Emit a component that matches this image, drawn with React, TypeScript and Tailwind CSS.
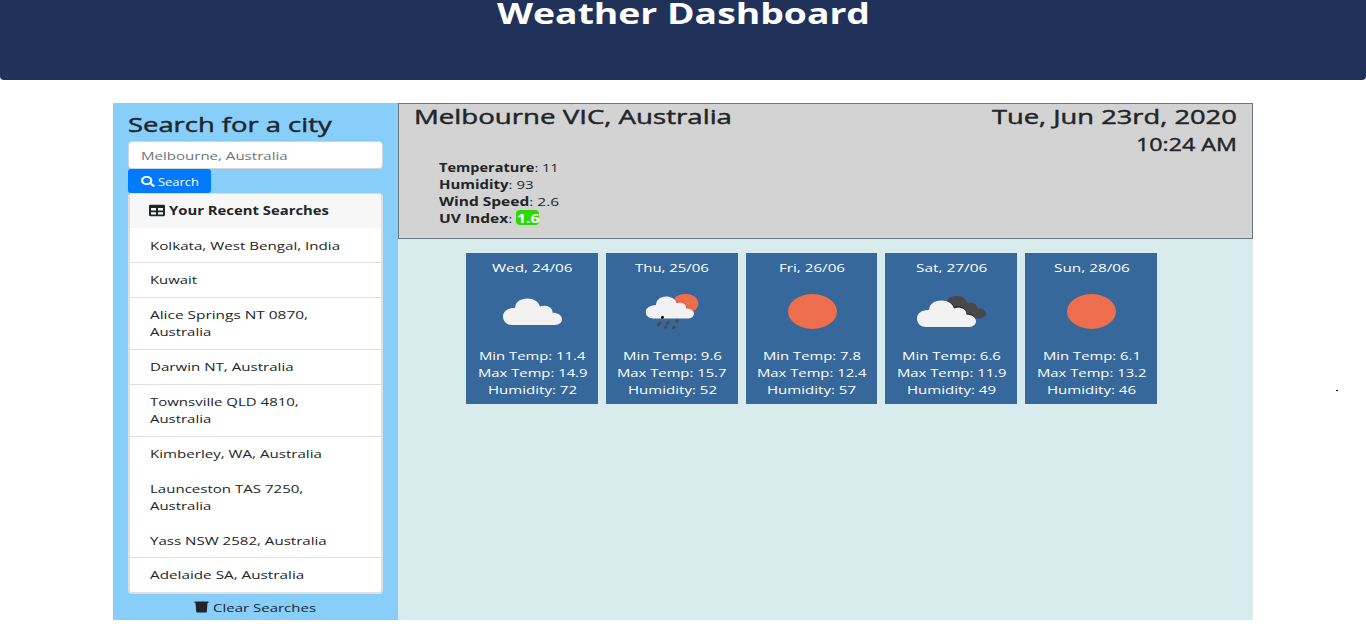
import { useLayoutEffect, useRef, useState, type ReactNode } from 'react';
import { FaSearch, FaTable } from 'react-icons/fa';

/** A single line of text, widened or narrowed to fill exactly `w` pixels. */
function Fit({ w, className = '', children }: { w: number; className?: string; children: ReactNode }) {
  const ref = useRef<HTMLSpanElement>(null);
  const [scale, setScale] = useState(1);
  useLayoutEffect(() => {
    if (ref.current) setScale(w / ref.current.offsetWidth);
  }, [w]);
  return (
    <span className={`block shrink-0 ${className}`} style={{ width: w }}>
      <span ref={ref} className="block w-max origin-left whitespace-nowrap" style={{ transform: `scaleX(${scale})` }}>
        {children}
      </span>
    </span>
  );
}

type Line = [string, number];

const recent: { lines: Line[]; size: string }[] = [
  { lines: [['Kolkata, West Bengal, India', 189.5]], size: 'h-[35px] border-b pt-[9px]' },
  { lines: [['Kuwait', 46.5]], size: 'h-[35px] border-b pt-2' },
  { lines: [['Alice Springs NT 0870,', 158], ['Australia', 61]], size: 'h-[52px] border-b pt-2' },
  { lines: [['Darwin NT, Australia', 143]], size: 'h-[35px] border-b pt-2' },
  { lines: [['Townsville QLD 4810,', 148.5], ['Australia', 61]], size: 'h-[52px] border-b pt-2' },
  { lines: [['Kimberley, WA, Australia', 172]], size: 'h-[35px] pt-2' },
  { lines: [['Launceston TAS 7250,', 153], ['Australia', 61]], size: 'h-[52px] pt-2' },
  { lines: [['Yass NSW 2582, Australia', 177]], size: 'h-[34px] border-b pt-2' },
  { lines: [['Adelaide SA, Australia', 154]], size: 'h-[34px] pt-2' },
];

const cloudPath =
  'M10 53C5 53 1 49.5 1 44.5C1 39.500 5.500 36 12 36L13.300 35.500C13 30.500 18 26.500 25.500 26.500C32 26.500 36.500 29.500 38 34.500C44 32.500 51 35 50.500 40.800C56 40.800 60 43.500 60 47.300C60 50.500 57 53 53 53Z';

function Cloud() {
  return (
    <svg className="h-[70px] w-[132px]" viewBox="466 277 132 70">
      <path transform="translate(502 272)" d={cloudPath} fill="#f1f2f1" />
    </svg>
  );
}

function SunRain() {
  return (
    <svg className="h-[70px] w-[132px]" viewBox="606 277 132 70">
      <ellipse cx="685.500" cy="303.500" rx="12.800" ry="9.800" fill="#ec6e4c" />
      <path
        d="M653 318.500C648.500 318.500 645.800 315.500 645.800 312C645.800 308 649.500 305.500 656 305C656 300 660.500 296.500 666 296.500C671 296.500 675.500 299 676.500 303C682 301 687 304 686.500 308C691 308 694 310.500 694 313.500C694 316.500 691 318.500 687.500 318.500Z"
        fill="#f2f2f4"
      />
      <path d="M676.500 302.500C682 301 687 304 686.500 308C691 308 693.500 310 694 312" fill="none" stroke="#e5431d" strokeWidth=".8" />
      <g stroke="#48484a" strokeWidth="2.800" strokeLinecap="round">
        <path d="M662.300 317.600L662.600 317.300" stroke="#111" />
        <path d="M658.700 324.800L659.700 323.200M667.200 323.700L668.200 322.400M676.800 321.400L677.200 320.700M665.300 327.200L665.800 326.800M673.200 328L674 327" />
      </g>
    </svg>
  );
}

function Sun() {
  return (
    <svg className="h-[70px] w-[132px]" viewBox="0 0 132 70">
      <ellipse cx="66.500" cy="34.500" rx="24.500" ry="17.400" fill="#ec6e4c" />
    </svg>
  );
}

function DarkCloud() {
  return (
    <svg className="h-[70px] w-[132px]" viewBox="885 277 132 70">
      <path
        d="M946 303C947 298.500 951 296 957 296C962.500 296 966 298.500 967 302.800C972 301.500 977.500 304 977.300 308.200C982.500 308.200 986 310.500 986 313.500C986 316.700 982.500 318.500 979 318.500L962 316Z"
        fill="#48484a"
      />
      <path d="M948.500 301.500C951.500 303 953 305 953.500 307.300C959.500 305.500 966.500 308.300 966.300 313.700C970.500 314 974 315.700 975.300 318.500" fill="none" stroke="#242426" strokeWidth="1" />
      <path transform="translate(916 274)" d={cloudPath} fill="#f1f2f1" />
    </svg>
  );
}

const forecast: { date: Line; icon: () => ReactNode; rows: Line[] }[] = [
  { date: ['Wed, 24/06', 81], icon: Cloud, rows: [['Min Temp: 11.4', 107], ['Max Temp: 14.9', 109.5], ['Humidity: 72', 89]] },
  { date: ['Thu, 25/06', 74], icon: SunRain, rows: [['Min Temp: 9.6', 99], ['Max Temp: 15.7', 109.5], ['Humidity: 52', 89]] },
  { date: ['Fri, 26/06', 66], icon: Sun, rows: [['Min Temp: 7.8', 98], ['Max Temp: 12.4', 109.5], ['Humidity: 57', 89]] },
  { date: ['Sat, 27/06', 71], icon: DarkCloud, rows: [['Min Temp: 6.6', 99], ['Max Temp: 11.9', 109.5], ['Humidity: 49', 89]] },
  { date: ['Sun, 28/06', 76], icon: Sun, rows: [['Min Temp: 6.1', 98], ['Max Temp: 13.2', 109.5], ['Humidity: 46', 89]] },
];

function Sidebar() {
  return (
    <aside className="flex w-[285px] shrink-0 flex-col bg-[#87cefa] px-[15px] pt-[7px]">
      <Fit w={203} className="text-[20.500px] leading-[29px] [-webkit-text-stroke:0.45px_#212529]">Search for a city</Fit>
      <div className="mt-[2px] flex h-[28px] items-center rounded-[4px] border border-[#ced4da] bg-white pl-3 text-[#6c757d]">
        <Fit w={146.5}>Melbourne, Australia</Fit>
      </div>
      <button className="flex h-[24px] w-[83px] items-center rounded-[3px] bg-[#007bff] pl-[13px] text-white">
        <FaSearch className="h-[11px] w-[14px]" preserveAspectRatio="none" />
        <Fit w={40.5} className="ml-[3px]">Search</Fit>
      </button>
      <section className="flex flex-col rounded-[4px] border-x-2 border-b-2 border-[#dfdfdf] bg-white">
        <header className="flex h-[35px] items-center rounded-t-[3px] border-t border-[#dfdfdf] bg-[#f7f7f7] pb-px pl-[19px]">
          <FaTable className="h-[13px] w-[16px]" preserveAspectRatio="none" />
          <Fit w={160} className="ml-1 font-bold">Your Recent Searches</Fit>
        </header>
        <ul>
          {recent.map((item) => (
            <li key={item.lines[0][0]} className={`border-[#dfdfdf] pl-5 ${item.size}`}>
              {item.lines.map(([text, w]) => (
                <Fit key={text} w={w}>{text}</Fit>
              ))}
            </li>
          ))}
        </ul>
      </section>
      <div className="flex h-[26px] items-center justify-center gap-1 pr-px">
        <svg className="h-[12px] w-[15px]" viewBox="0 0 15 12">
          <path d="M0.500 0.500H14.500V2H13.500L12.800 10.700Q12.700 11.500 12 11.500H3Q2.300 11.500 2.200 10.700L1.500 2H0.500Z" fill="#212529" />
        </svg>
        <Fit w={103}>Clear Searches</Fit>
      </div>
    </aside>
  );
}

function Current() {
  return (
    <section className="flex h-[136px] justify-between border border-[#6c757d] bg-[#d3d3d3] pr-[15px] pl-[15px]">
      <div>
        <Fit w={318} className="-mt-px text-[20.500px] leading-[26px] [-webkit-text-stroke:0.45px_#212529]">Melbourne VIC, Australia</Fit>
        <div className="mt-[30px] pl-[25px]">
          <Fit w={120}><b>Temperature</b>: 11</Fit>
          <Fit w={95}><b>Humidity</b>: 93</Fit>
          <Fit w={120}><b>Wind Speed</b>: 2.6</Fit>
          <div className="flex">
            <Fit w={73}><b>UV Index</b>:</Fit>
            <span className="ml-1 flex h-[15px] w-[23px] items-center justify-center rounded-[4px] bg-[#2bd900] pt-px text-white">
              <Fit w={22} className="font-bold">1.6</Fit>
            </span>
          </div>
        </div>
      </div>
      <div className="flex flex-col items-end">
        <Fit w={245} className="-mt-px text-[20.500px] leading-[26px] [-webkit-text-stroke:0.45px_#212529]">Tue, Jun 23rd, 2020</Fit>
        <Fit w={101} className="mt-[2px] text-[17.500px] leading-[27px] [-webkit-text-stroke:0.4px_#212529]">10:24 AM</Fit>
      </div>
    </section>
  );
}

export default function App() {
  return (
    <div className="relative h-[638px] overflow-hidden bg-white font-['Open_Sans','Noto_Sans',sans-serif] text-[11.500px] leading-[17px] text-[#212529]">
      <header className="flex h-[80px] justify-center rounded-b-[4px] bg-[#21325a] text-white">
        <Fit w={373} className="text-[28px] leading-[26px] font-bold">Weather Dashboard</Fit>
      </header>
      <main className="mt-[23px] ml-[113px] flex h-[517px] w-[1140px]">
        <Sidebar />
        <div className="flex grow flex-col bg-[#d8ecee]">
          <Current />
          <div className="mt-[14px] ml-[68px] grid w-[691px] grid-cols-5 gap-2">
            {forecast.map(({ date, icon: Icon, rows }) => (
              <article key={date[0]} className="flex h-[151px] flex-col items-center overflow-hidden bg-[#36689b] pt-[6px] text-white">
                <Fit w={date[1]} className="ml-px">{date[0]}</Fit>
                <div className="mt-px h-[70px]"><Icon /></div>
                {rows.map(([text, w]) => (
                  <Fit key={text} w={w} className="ml-px">{text}</Fit>
                ))}
              </article>
            ))}
          </div>
        </div>
      </main>
      <span className="absolute top-[390px] left-[1336px] h-px w-[2px] bg-black" />
    </div>
  );
}
